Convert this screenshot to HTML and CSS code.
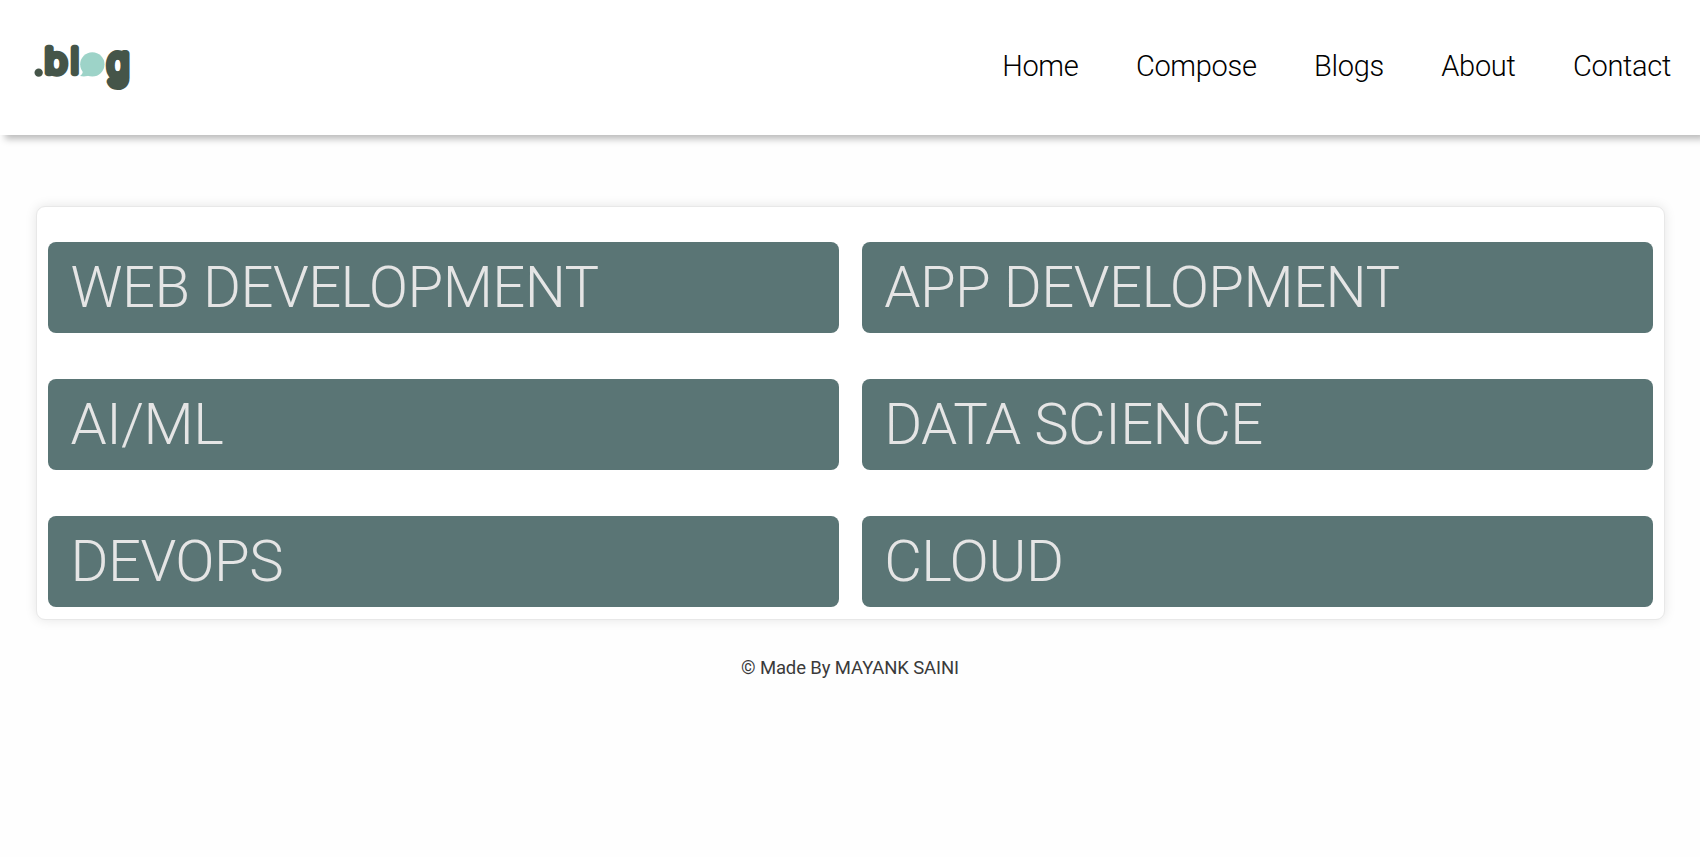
FILE: index.html
```html
<!DOCTYPE html>
<html lang="en">
<head>
<meta charset="utf-8">
<title>Blog</title>
<link rel="stylesheet" href="styles.css">
</head>
<body>
<header class="header">
  <a class="logo" href="#">
    <svg class="logo-mark" viewBox="0 0 390 210" role="img" aria-label=".blog">
      <circle class="bubble" cx="217" cy="103" r="36.5"/>
      <path class="bubble" d="M189 118Q190 132 180 138Q198 142 211 134Z"/>
      <circle class="dot" cx="56" cy="128" r="12.5"/>
      <g class="logo-text">
        <text transform="translate(75 129) scale(1.1 1)">b</text>
        <text x="153" y="129">l</text>
        <text transform="translate(262 141) scale(1.1 1.22)">g</text>
      </g>
    </svg>
  </a>
  <nav class="nav">
    <a href="#">Home</a>
    <a href="#">Compose</a>
    <a href="#">Blogs</a>
    <a href="#">About</a>
    <a href="#">Contact</a>
  </nav>
</header>
<main class="panel">
  <a class="category" href="#">WEB DEVELOPMENT</a>
  <a class="category" href="#">APP DEVELOPMENT</a>
  <a class="category" href="#">AI/ML</a>
  <a class="category" href="#">DATA SCIENCE</a>
  <a class="category" href="#">DEVOPS</a>
  <a class="category" href="#">CLOUD</a>
</main>
<footer class="footer">© Made By MAYANK SAINI</footer>
</body>
</html>
```
FILE: styles.css
```css
* { box-sizing: border-box; }
body {
  margin: 0;
  background: #fefefe;
  font-family: Roboto, "Liberation Sans", sans-serif;
}
a { color: inherit; text-decoration: none; }
.header {
  display: flex;
  align-items: center;
  justify-content: space-between;
  height: 135px;
  padding: 0 29px 5px 20px;
  background: #fff;
  box-shadow: 5px 4px 7px rgba(0, 0, 0, 0.27);
}
.logo-mark { display: block; width: 130px; height: 70px; }
.bubble { fill: #9dd3c8; }
.dot { fill: #455549; }
.logo-text {
  font-family: Inter, sans-serif;
  font-size: 101px;
  font-weight: 200;
  fill: #455549;
  stroke: #455549;
  stroke-width: 20px;
  stroke-linejoin: round;
}
.nav {
  display: flex;
  gap: 57.4px;
  padding-top: 2px;
  font-size: 29px;
  font-weight: 300;
  letter-spacing: -0.3px;
  color: #000;
}
.panel {
  display: grid;
  grid-template-columns: 1fr 1fr;
  gap: 46px 23px;
  margin: 71px 35px 0 36px;
  padding: 35px 11.5px 11.5px 11px;
  border: 1px solid #e8e8e8;
  border-radius: 9px;
  background: #fff;
  box-shadow: 0 0 12px rgba(0, 0, 0, 0.1);
}
.category {
  height: 91px;
  padding-left: 22.5px;
  border-radius: 8px;
  background: #5a7575;
  color: #e5e5e5;
  font-size: 58px;
  font-weight: 300;
  letter-spacing: -0.55px;
  line-height: 91px;
}
.footer {
  margin-top: 36.5px;
  text-align: center;
  font-size: 18.5px;
  letter-spacing: -0.12px;
  line-height: 24px;
  color: #3a3a3a;
}
```
